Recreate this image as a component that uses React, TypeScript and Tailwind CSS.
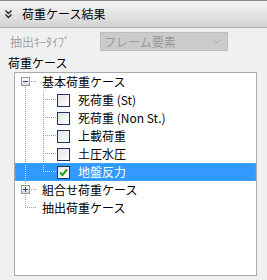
import React from "react";

const FONT = { fontFamily: '"Noto Sans CJK JP", "Noto Sans", sans-serif' };

type Kind = "rootFirst" | "rootMid" | "rootLast" | "child" | "childLast";

const dotsV = (x: number, y1: number, y2: number, c: string) => {
  const out = [];
  for (let y = y1; y <= y2; y += 2) out.push(<rect key={`v${x}-${y}`} x={x} y={y} width={1} height={1} fill={c} />);
  return out;
};
const dotsH = (y: number, x1: number, x2: number, c: string) => {
  const out = [];
  for (let x = x1; x <= x2; x += 2) out.push(<rect key={`h${y}-${x}`} x={x} y={y} width={1} height={1} fill={c} />);
  return out;
};

const ExpandBox = ({ plus }: { plus?: boolean }) => (
  <g>
    <defs>
      <linearGradient id="eb" x1="0" y1="0" x2="0" y2="1">
        <stop offset="0" stopColor="#ffffff" />
        <stop offset="1" stopColor="#d8d8d8" />
      </linearGradient>
    </defs>
    <rect x={5.5} y={4.5} width={8} height={8} fill="url(#eb)" stroke="#959595" />
    <rect x={7} y={8} width={5} height={1} fill="#2c4a8a" />
    {plus && <rect x={9} y={6} width={1} height={5} fill="#2c4a8a" />}
  </g>
);

const Connector = ({ kind, sel }: { kind: Kind; sel?: boolean }) => {
  const c = sel ? "#d6e8ff" : "#a0a0a0";
  if (kind === "child" || kind === "childLast") {
    return (
      <svg width={41} height={18} className="shrink-0">
        {dotsV(9, 0, 17, c)}
        {kind === "child" ? dotsV(27, 0, 17, c) : dotsV(27, 0, 8, c)}
        {dotsH(8, 29, 39, c)}
      </svg>
    );
  }
  return (
    <svg width={26} height={18} className="shrink-0">
      {kind === "rootFirst" && <>{dotsV(9, 14, 17, c)}<ExpandBox /></>}
      {kind === "rootMid" && <>{dotsV(9, 0, 3, c)}{dotsV(9, 14, 17, c)}<ExpandBox plus /></>}
      {kind === "rootLast" && <>{dotsV(9, 0, 8, c)}{dotsH(8, 11, 19, c)}</>}
      {kind !== "rootLast" && dotsH(8, 15, 19, c)}
    </svg>
  );
};

const CheckBox = ({ checked }: { checked?: boolean }) => (
  <div className="w-[13px] h-[13px] shrink-0 border border-[#1c3566] bg-gradient-to-br from-[#e4e4e4] to-white flex items-center justify-center">
    {checked && (
      <svg width={9} height={9} viewBox="0 0 9 9">
        <path d="M1 4.5 L3.5 7 L8 1.5" fill="none" stroke="#21a121" strokeWidth={2} />
      </svg>
    )}
  </div>
);

const rows: { kind: Kind; label: string; check?: boolean; checked?: boolean; sel?: boolean }[] = [
  { kind: "rootFirst", label: "基本荷重ケース" },
  { kind: "child", label: "死荷重 (St)", check: true },
  { kind: "child", label: "死荷重 (Non St.)", check: true },
  { kind: "child", label: "上載荷重", check: true },
  { kind: "child", label: "土圧水圧", check: true },
  { kind: "childLast", label: "地盤反力", check: true, checked: true, sel: true },
  { kind: "rootMid", label: "組合せ荷重ケース" },
  { kind: "rootLast", label: "抽出荷重ケース" },
];

export default function App() {
  return (
    <div className="w-[267px] h-[280px] bg-[#f0f0f0] text-[12px] text-black overflow-hidden" style={FONT}>
      <div className="h-[28px] border-t border-b border-t-[#8a8a8a] border-b-[#a8a8a8] bg-gradient-to-b from-[#f6f6f6] to-[#d2d2d2] flex items-center">
        <svg width={7} height={9} viewBox="0 0 7 9" className="ml-[5px]">
          <path d="M0.5 0.5 L3.5 3.5 L6.5 0.5 M0.5 4.5 L3.5 7.5 L6.5 4.5" fill="none" stroke="#222" strokeWidth={1.4} />
        </svg>
        <span className="ml-[10px] leading-none">荷重ケース結果</span>
      </div>
      <div className="mt-[4px] h-[19px] flex items-center">
        <span className="ml-[10px] w-[90px] text-[#a3a3a3]">抽出ｷｰﾀｲﾌﾟ</span>
        <div className="w-[128px] h-[19px] border border-[#bcbcbc] bg-[#cbcbcb] flex items-center justify-between">
          <span className="ml-[3px] text-[#999999]">フレーム要素</span>
          <svg width={8} height={5} viewBox="0 0 8 5" className="mr-[6px]">
            <path d="M0.5 0.5 L4 4 L7.5 0.5" fill="none" stroke="#a9a9a9" />
          </svg>
        </div>
      </div>
      <div className="mt-[4px] ml-[8px] h-[16px] leading-[16px]">荷重ケース</div>
      <div className="mt-[1px] ml-[14px] w-[243px] h-[204px] border border-[#a9a9b0] bg-white">
        {rows.map((r) => (
          <div
            key={r.label}
            className={`h-[18px] flex items-center pl-[1px] ${
              r.sel ? "bg-[#3399ff] text-white outline-1 outline-dotted outline-[#e8841c] -outline-offset-1" : ""
            }`}
          >
            <Connector kind={r.kind} sel={r.sel} />
            {r.check ? (
              <>
                <CheckBox checked={r.checked} />
                <span className="ml-[8px] whitespace-nowrap">{r.label}</span>
              </>
            ) : (
              <span className="whitespace-nowrap">{r.label}</span>
            )}
          </div>
        ))}
      </div>
    </div>
  );
}
